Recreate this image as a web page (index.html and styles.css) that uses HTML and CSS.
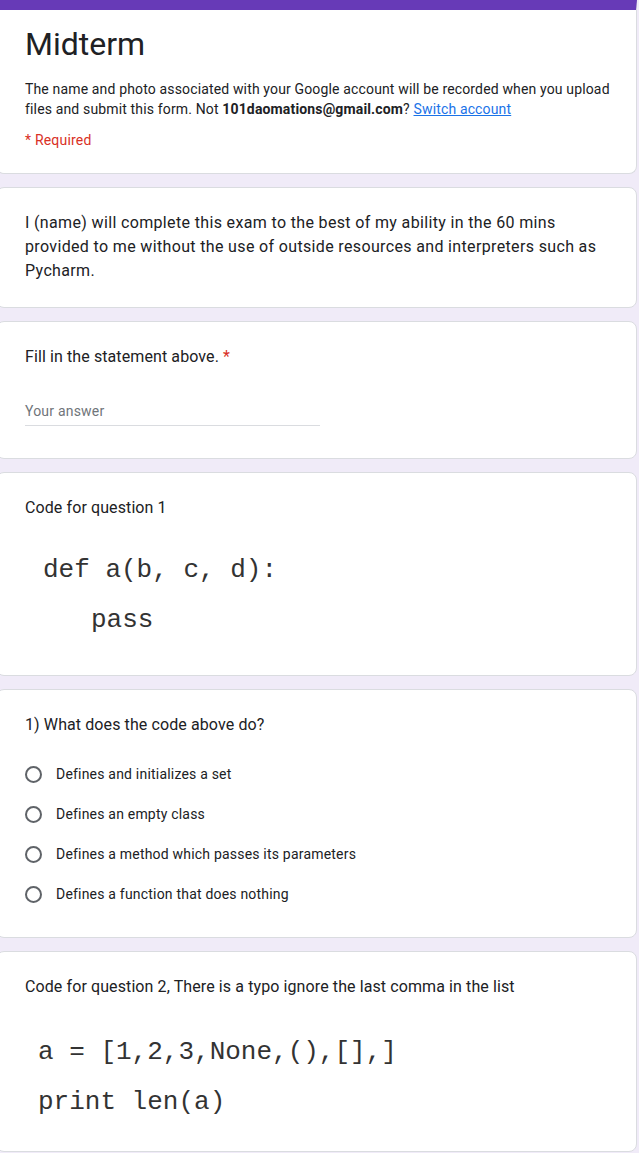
FILE: index.html
```html
<!DOCTYPE html>
<html>
<head>
<meta charset="utf-8">
<link rel="stylesheet" href="styles.css">
</head>
<body>
<div class="form">
  <div class="card head">
    <h1 class="title">Midterm</h1>
    <p class="desc">The name and photo associated with your Google account will be recorded when you upload files and submit this form. Not <b>101daomations@gmail.com</b>? <a class="link" href="#">Switch account</a></p>
    <p class="required">* Required</p>
  </div>

  <div class="card">
    <p class="qtext wide">I (name) will complete this exam to the best of my ability in the 60 mins provided to me without the use of outside resources and interpreters such as Pycharm.</p>
  </div>

  <div class="card">
    <p class="qtext">Fill in the statement above. <span class="star">*</span></p>
    <div class="answer"><span class="placeholder">Your answer</span></div>
  </div>

  <div class="card">
    <p class="qtext">Code for question 1</p>
    <div class="code code1">
      <div class="cline">def a(b, c, d):</div>
      <div class="cline indent">pass</div>
    </div>
  </div>

  <div class="card">
    <p class="qtext">1) What does the code above do?</p>
    <div class="options">
      <div class="opt"><span class="radio"></span><span class="otext">Defines and initializes a set</span></div>
      <div class="opt"><span class="radio"></span><span class="otext">Defines an empty class</span></div>
      <div class="opt"><span class="radio"></span><span class="otext">Defines a method which passes its parameters</span></div>
      <div class="opt"><span class="radio"></span><span class="otext">Defines a function that does nothing</span></div>
    </div>
  </div>

  <div class="card">
    <p class="qtext">Code for question 2, There is a typo ignore the last comma in the list</p>
    <div class="code code2">
      <div class="cline">a = [1,2,3,None,(),[],]</div>
      <div class="cline">print len(a)</div>
    </div>
  </div>
</div>
</body>
</html>
```

FILE: styles.css
```css
html, body {
  margin: 0;
  padding: 0;
}
body {
  background: #f0ebf8;
  font-family: Roboto, "Liberation Sans", Arial, sans-serif;
  color: #202124;
  overflow: hidden;
  width: 639px;
  height: 1153px;
}
.form {
  margin-left: -4px;
  width: 641px;
  display: flex;
  flex-direction: column;
  gap: 13px;
}
.card {
  background: #fff;
  border: 1px solid #dadce0;
  border-radius: 8px;
  padding: 23px 24px 24px 28px;
}
.card.head {
  border-top: 10px solid #673ab7;
  border-top-left-radius: 0;
  border-top-right-radius: 0;
  padding-top: 14px;
  padding-bottom: 23px;
  padding-right: 16px;
}
.title {
  margin: 0;
  font-size: 32px;
  line-height: 40px;
  font-weight: 400;
}
.desc {
  margin: 15px 0 0;
  font-size: 14px;
  line-height: 20px;
  letter-spacing: 0.15px;
}
.desc b {
  font-weight: 700;
}
.link {
  color: #1a73e8;
  text-decoration: underline;
}
.required {
  margin: 11px 0 0;
  font-size: 14px;
  line-height: 20px;
  letter-spacing: 0.2px;
  color: #d93025;
}
.qtext {
  margin: 0;
  font-size: 16px;
  line-height: 24px;
  letter-spacing: 0.1px;
}
.qtext.wide {
  letter-spacing: 0.35px;
}
.star {
  color: #d93025;
}
.answer {
  margin-top: 32px;
  width: 295px;
  border-bottom: 1px solid #dadce0;
  padding-bottom: 4px;
  margin-bottom: 8px;
}
.placeholder {
  display: block;
  font-size: 14px;
  line-height: 20px;
  letter-spacing: 0.2px;
  color: #70757a;
}
.code {
  font-family: "Courier New", Courier, "Nimbus Mono PS", "Nimbus Mono L", FreeMono, "Liberation Mono", monospace;
  font-size: 26px;
  line-height: 50px;
  color: #333;
}
.cline {
  white-space: pre;
}
.code1 {
  margin: 25px 0 6px 18px;
}
.code1 .indent {
  padding-left: 48px;
}
.code2 {
  margin: 28px 0 0 13px;
}
.options {
  margin-top: 17px;
  margin-bottom: -1px;
  display: flex;
  flex-direction: column;
}
.opt {
  height: 40px;
  display: flex;
  align-items: center;
}
.radio {
  width: 17px;
  height: 17px;
  border: 2px solid #5f6368;
  border-radius: 50%;
  box-sizing: border-box;
  flex: none;
}
.otext {
  margin-left: 14px;
  font-size: 14px;
  line-height: 20px;
  letter-spacing: 0.2px;
}
```
